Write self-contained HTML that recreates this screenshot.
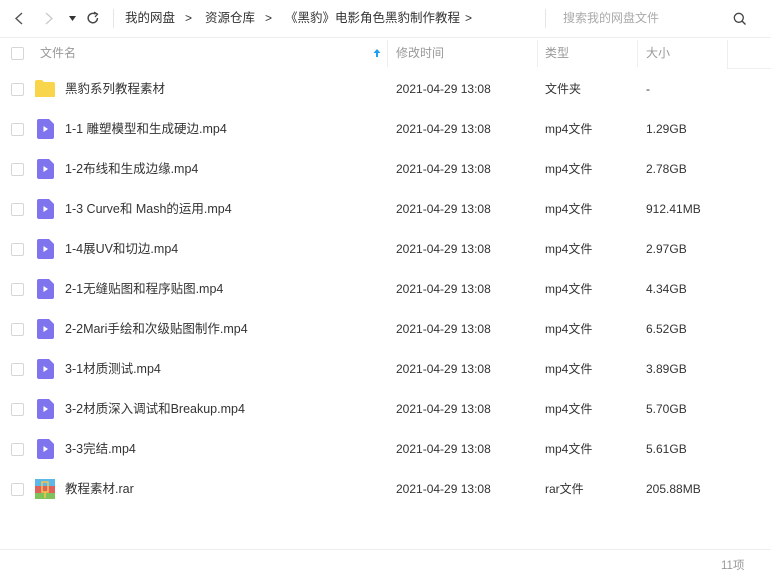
<!DOCTYPE html>
<html><head><meta charset="utf-8"><style>
*{margin:0;padding:0;box-sizing:border-box}
body{width:771px;height:583px;background:#fff;font-family:"Liberation Sans","Noto Sans CJK SC",sans-serif;font-size:12px;color:#333;position:relative;overflow:hidden}
.a{position:absolute;white-space:nowrap}
.t{position:absolute;white-space:nowrap;height:16px;line-height:16px;overflow:visible}
.cb{position:absolute;left:11px;width:13px;height:13px;border:1px solid #d6d6d6;border-radius:2px;background:#fff}
.g{color:#999}
.r{position:absolute;left:0;width:771px;height:40px}
.r .cb{top:83px}
.r .n{left:65px;top:81px;font-size:12.5px}
.r .d{left:396px;top:81px}
.r .k{left:545px;top:81px}
.r .s{left:646px;top:81px}
</style></head><body>
<svg class="a" style="left:13px;top:11px" width="12" height="15"><path d="M9 2L3 7.5L9 13" stroke="#555" stroke-width="1.4" fill="none"/></svg>
<svg class="a" style="left:43px;top:11px" width="12" height="15"><path d="M3 2L9 7.5L3 13" stroke="#ccc" stroke-width="1.4" fill="none"/></svg>
<svg class="a" style="left:69px;top:16px" width="7" height="5"><path d="M0 0H7L3.5 5Z" fill="#333"/></svg>
<svg class="a" style="left:86px;top:11px" width="14" height="14"><path d="M11.5 7A4.7 4.7 0 1 1 9.5 3.2" stroke="#444" stroke-width="1.4" fill="none"/><path d="M8 1L11.5 3.2L9 6" stroke="#444" stroke-width="1.3" fill="none"/></svg>
<div class="a" style="left:113px;top:9px;width:1px;height:19px;background:#e5e5e5"></div>
<div class="t" style="left:125px;top:10px;font-size:12.5px">我的网盘</div>
<div class="t" style="left:185px;top:10px">&gt;</div>
<div class="t" style="left:205px;top:10px;font-size:12.5px">资源仓库</div>
<div class="t" style="left:265px;top:10px">&gt;</div>
<div class="t" style="left:285px;top:10px;font-size:12.5px">《黑豹》电影角色黑豹制作教程</div>
<div class="t" style="left:465px;top:10px">&gt;</div>
<div class="a" style="left:545px;top:9px;width:1px;height:19px;background:#e5e5e5"></div>
<div class="t" style="left:563px;top:10px;color:#aaa">搜索我的网盘文件</div>
<svg class="a" style="left:733px;top:12px" width="14" height="14"><circle cx="5.8" cy="5.8" r="4.5" stroke="#444" stroke-width="1.3" fill="none"/><path d="M9 9L12.5 12.5" stroke="#444" stroke-width="1.4"/></svg>
<div class="a" style="left:0;top:37px;width:771px;height:1px;background:#eee"></div>
<div class="cb" style="top:47px"></div>
<div class="t g" style="left:40px;top:45px">文件名</div>
<svg class="a" style="left:373px;top:48px" width="8" height="10"><path d="M4 1L7.5 5H5V9H3V5H0.5Z" fill="#1e9ff2"/></svg>
<div class="a" style="left:387px;top:40px;width:1px;height:27px;background:#eee"></div>
<div class="t g" style="left:396px;top:45px">修改时间</div>
<div class="a" style="left:537px;top:40px;width:1px;height:27px;background:#eee"></div>
<div class="t g" style="left:545px;top:45px">类型</div>
<div class="a" style="left:637px;top:40px;width:1px;height:27px;background:#eee"></div>
<div class="t g" style="left:646px;top:45px">大小</div>
<div class="a" style="left:727px;top:40px;width:1px;height:29px;background:#eee"></div>
<div class="a" style="left:727px;top:68px;width:44px;height:1px;background:#eee"></div>

<div class="r" style="top:0"><div class="cb"></div>
<svg class="a" style="left:35px;top:80px" width="20" height="17"><path d="M0 2Q0 0 2 0H7L9 2H18Q20 2 20 4V17H0Z" fill="#f8d54a"/></svg>
<div class="t n">黑豹系列教程素材</div><div class="t d">2021-04-29 13:08</div><div class="t k">文件夹</div><div class="t s">-</div></div>

<div class="r" style="top:40px"><div class="cb"></div><svg class="a" style="left:37px;top:79px" width="17" height="20"><path d="M2 0H12L17 5V18Q17 20 15 20H2Q0 20 0 18V2Q0 0 2 0Z" fill="#8074ee"/><path d="M6.5 7V13L11 10Z" fill="#fff"/></svg><div class="t n">1-1 雕塑模型和生成硬边.mp4</div><div class="t d">2021-04-29 13:08</div><div class="t k">mp4文件</div><div class="t s">1.29GB</div></div>
<div class="r" style="top:80px"><div class="cb"></div><svg class="a" style="left:37px;top:79px" width="17" height="20"><path d="M2 0H12L17 5V18Q17 20 15 20H2Q0 20 0 18V2Q0 0 2 0Z" fill="#8074ee"/><path d="M6.5 7V13L11 10Z" fill="#fff"/></svg><div class="t n">1-2布线和生成边缘.mp4</div><div class="t d">2021-04-29 13:08</div><div class="t k">mp4文件</div><div class="t s">2.78GB</div></div>
<div class="r" style="top:120px"><div class="cb"></div><svg class="a" style="left:37px;top:79px" width="17" height="20"><path d="M2 0H12L17 5V18Q17 20 15 20H2Q0 20 0 18V2Q0 0 2 0Z" fill="#8074ee"/><path d="M6.5 7V13L11 10Z" fill="#fff"/></svg><div class="t n">1-3 Curve和 Mash的运用.mp4</div><div class="t d">2021-04-29 13:08</div><div class="t k">mp4文件</div><div class="t s">912.41MB</div></div>
<div class="r" style="top:160px"><div class="cb"></div><svg class="a" style="left:37px;top:79px" width="17" height="20"><path d="M2 0H12L17 5V18Q17 20 15 20H2Q0 20 0 18V2Q0 0 2 0Z" fill="#8074ee"/><path d="M6.5 7V13L11 10Z" fill="#fff"/></svg><div class="t n">1-4展UV和切边.mp4</div><div class="t d">2021-04-29 13:08</div><div class="t k">mp4文件</div><div class="t s">2.97GB</div></div>
<div class="r" style="top:200px"><div class="cb"></div><svg class="a" style="left:37px;top:79px" width="17" height="20"><path d="M2 0H12L17 5V18Q17 20 15 20H2Q0 20 0 18V2Q0 0 2 0Z" fill="#8074ee"/><path d="M6.5 7V13L11 10Z" fill="#fff"/></svg><div class="t n">2-1无缝贴图和程序贴图.mp4</div><div class="t d">2021-04-29 13:08</div><div class="t k">mp4文件</div><div class="t s">4.34GB</div></div>
<div class="r" style="top:240px"><div class="cb"></div><svg class="a" style="left:37px;top:79px" width="17" height="20"><path d="M2 0H12L17 5V18Q17 20 15 20H2Q0 20 0 18V2Q0 0 2 0Z" fill="#8074ee"/><path d="M6.5 7V13L11 10Z" fill="#fff"/></svg><div class="t n">2-2Mari手绘和次级贴图制作.mp4</div><div class="t d">2021-04-29 13:08</div><div class="t k">mp4文件</div><div class="t s">6.52GB</div></div>
<div class="r" style="top:280px"><div class="cb"></div><svg class="a" style="left:37px;top:79px" width="17" height="20"><path d="M2 0H12L17 5V18Q17 20 15 20H2Q0 20 0 18V2Q0 0 2 0Z" fill="#8074ee"/><path d="M6.5 7V13L11 10Z" fill="#fff"/></svg><div class="t n">3-1材质测试.mp4</div><div class="t d">2021-04-29 13:08</div><div class="t k">mp4文件</div><div class="t s">3.89GB</div></div>
<div class="r" style="top:320px"><div class="cb"></div><svg class="a" style="left:37px;top:79px" width="17" height="20"><path d="M2 0H12L17 5V18Q17 20 15 20H2Q0 20 0 18V2Q0 0 2 0Z" fill="#8074ee"/><path d="M6.5 7V13L11 10Z" fill="#fff"/></svg><div class="t n">3-2材质深入调试和Breakup.mp4</div><div class="t d">2021-04-29 13:08</div><div class="t k">mp4文件</div><div class="t s">5.70GB</div></div>
<div class="r" style="top:360px"><div class="cb"></div><svg class="a" style="left:37px;top:79px" width="17" height="20"><path d="M2 0H12L17 5V18Q17 20 15 20H2Q0 20 0 18V2Q0 0 2 0Z" fill="#8074ee"/><path d="M6.5 7V13L11 10Z" fill="#fff"/></svg><div class="t n">3-3完结.mp4</div><div class="t d">2021-04-29 13:08</div><div class="t k">mp4文件</div><div class="t s">5.61GB</div></div>
<div class="r" style="top:400px"><div class="cb"></div>
<svg class="a" style="left:35px;top:79px" width="20" height="20"><rect width="20" height="7" fill="#5bb8e8"/><rect y="7" width="20" height="7" fill="#e0605c"/><rect y="14" width="20" height="6" fill="#7fc25a"/><rect x="7" y="3" width="6" height="10" fill="none" stroke="#f4c64a" stroke-width="1.5"/><path d="M10 13V19" stroke="#f4c64a" stroke-width="1.5"/></svg>
<div class="t n">教程素材.rar</div><div class="t d">2021-04-29 13:08</div><div class="t k">rar文件</div><div class="t s">205.88MB</div></div>

<div class="a" style="left:0;top:549px;width:771px;height:1px;background:#eee"></div>
<div class="t g" style="left:721px;top:558px;font-size:11.5px">11项</div>
</body></html>
